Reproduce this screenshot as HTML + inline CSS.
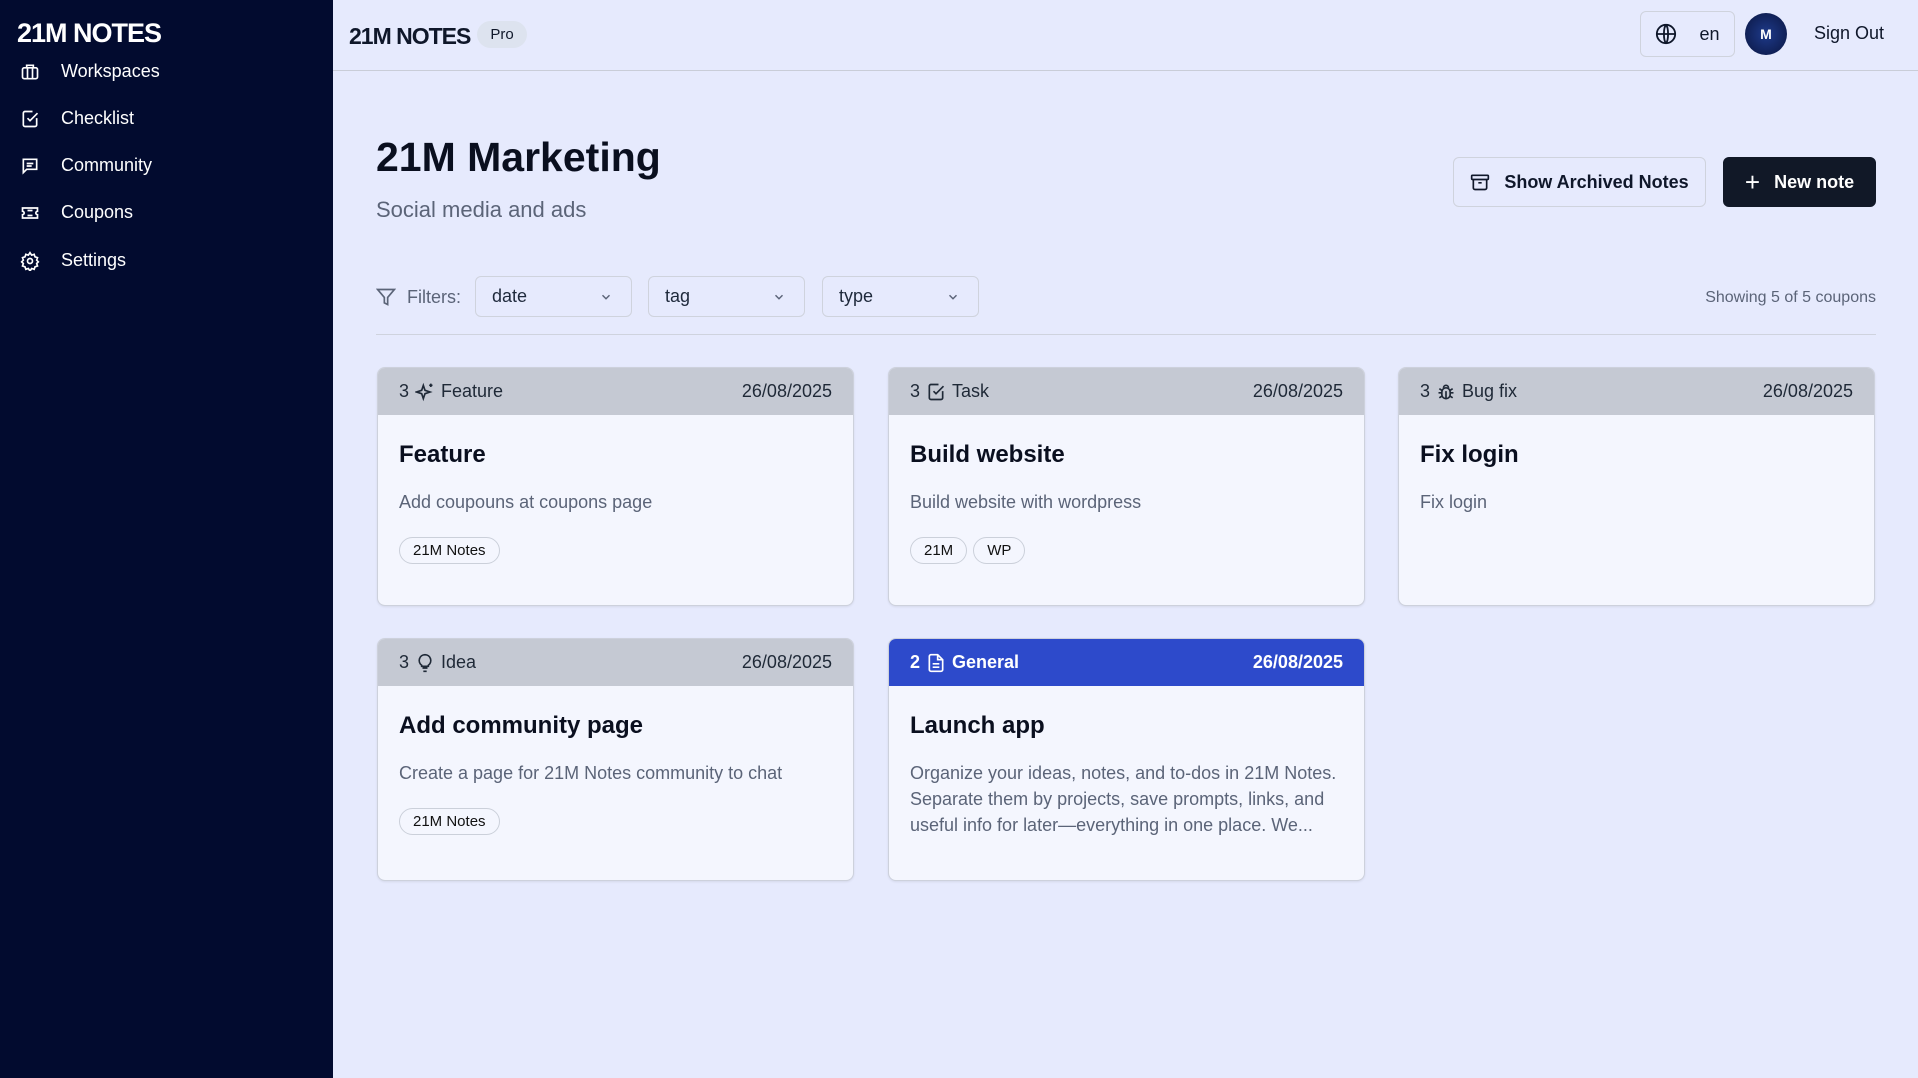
<!DOCTYPE html>
<html><head><meta charset="utf-8"><style>
*{box-sizing:border-box;margin:0;padding:0}
body{width:1918px;height:1078px;overflow:hidden;background:#e6eafd;font-family:"Liberation Sans",sans-serif;color:#0f172a;position:relative}
.side{position:absolute;left:0;top:0;width:333px;height:1078px;background:#020b2f;color:#fff}
.logo{font-weight:900;letter-spacing:-1px;font-size:27px}
.side .logo{position:absolute;left:17px;top:18px}
.nav{position:absolute;left:20px;font-size:18px;display:flex;align-items:center;gap:21px}
.nav svg{width:20px;height:20px}
.hdr{position:absolute;left:333px;top:0;right:0;height:71px;border-bottom:1px solid #c9cdd8}
.abs{position:absolute}
.btn{position:absolute;border:1px solid #cfd3dd;border-radius:6px;display:flex;align-items:center;justify-content:center;gap:14px;font-size:18px;font-weight:600}
.sel{position:absolute;top:276px;height:41px;border:1px solid #cfd3dd;border-radius:6px;font-size:18px;color:#1e293b;padding-left:16px;display:flex;align-items:center}
.sel svg{position:absolute;right:18px;top:13px}
.card{position:absolute;width:477px;background:#f4f6fe;border:1px solid #cdd1dc;border-radius:8px;overflow:hidden;box-shadow:0 1px 2px rgba(0,0,0,.08)}
.ch{height:47px;background:#c5c9d3;display:flex;align-items:center;justify-content:space-between;padding:0 21px;font-size:18px;color:#1f2937}
.ch span{display:flex;align-items:center;gap:6px}
.ct{font-size:24px;font-weight:700;color:#0a0f1f;margin:26px 21px 0}
.cd{font-size:18px;color:#5b6478;margin:20px 21px 0;line-height:26px}
.tags{margin:22px 21px 0;display:flex;gap:6px}
.tag{border:1px solid #cbd0da;border-radius:14px;font-size:15px;font-weight:500;padding:4px 13px;color:#111}
</style></head><body>
<div class="side">
<div class="logo">21M NOTES</div>
<div class="nav" style="top:61px"><svg viewBox="0 0 24 24" fill="none" stroke="#fff" stroke-width="2"><rect x="3" y="7" width="18" height="13" rx="2"/><path d="M8 7V4h8v3M9 7v13M15 7v13"/></svg>Workspaces</div>
<div class="nav" style="top:108px"><svg viewBox="0 0 24 24" fill="none" stroke="#fff" stroke-width="2"><path d="M20 11v8a2 2 0 0 1-2 2H6a2 2 0 0 1-2-2V5a2 2 0 0 1 2-2h9"/><path d="M9 11l3 3 9-9"/></svg>Checklist</div>
<div class="nav" style="top:155px"><svg viewBox="0 0 24 24" fill="none" stroke="#fff" stroke-width="2"><path d="M4 4h16v12H8l-4 4z"/><path d="M8 9h8M8 12h6"/></svg>Community</div>
<div class="nav" style="top:202px"><svg viewBox="0 0 24 24" fill="none" stroke="#fff" stroke-width="2"><path d="M3 6h18v4a2 2 0 0 0 0 4v4H3v-4a2 2 0 0 0 0-4z"/><path d="M9 9h6M9 15h6"/></svg>Coupons</div>
<div class="nav" style="top:250px"><svg viewBox="0 0 24 24" fill="none" stroke="#fff" stroke-width="2"><circle cx="12" cy="12" r="3"/><path d="M12 2l2 3 3-1 1 3 3 1-1 3 2 2-2 2 1 3-3 1-1 3-3-1-2 3-2-3-3 1-1-3-3-1 1-3-2-2 2-2-1-3 3-1 1-3 3 1z"/></svg>Settings</div>
</div>
<div class="hdr">
<div class="logo abs" style="left:16px;top:23px;font-size:23px">21M NOTES</div>
<div class="abs" style="left:144px;top:21px;width:50px;height:27px;border-radius:14px;background:#dde3ef;font-size:15px;display:flex;align-items:center;justify-content:center">Pro</div>
</div>
<div class="btn" style="left:1640px;top:11px;width:95px;height:46px;gap:22px;font-weight:500"><svg width="22" height="22" viewBox="0 0 24 24" fill="none" stroke="#0f172a" stroke-width="2"><circle cx="12" cy="12" r="10"/><path d="M2 12h20M12 2c3 3 3 17 0 20M12 2c-3 3-3 17 0 20"/></svg>en</div>
<div class="abs" style="left:1745px;top:13px;width:42px;height:42px;border-radius:50%;background:radial-gradient(#1e3a8a,#0a1540);color:#fff;font-size:14px;font-weight:700;display:flex;align-items:center;justify-content:center">M</div>
<div class="abs" style="left:1814px;top:23px;font-size:18px;font-weight:500">Sign Out</div>
<div class="abs" style="left:376px;top:134px;font-size:41px;font-weight:700;color:#0a0f1f">21M Marketing</div>
<div class="abs" style="left:376px;top:197px;font-size:22px;color:#5b6478">Social media and ads</div>
<div class="btn" style="left:1453px;top:157px;width:253px;height:50px"><svg width="20" height="20" viewBox="0 0 24 24" fill="none" stroke="#0f172a" stroke-width="2"><rect x="2" y="4" width="20" height="5" rx="1"/><path d="M4 9v10a2 2 0 0 0 2 2h12a2 2 0 0 0 2-2V9M10 13h4"/></svg>Show Archived Notes</div>
<div class="btn" style="left:1723px;top:157px;width:153px;height:50px;background:#111827;color:#fff;border-color:#111827"><span style="font-size:26px;font-weight:300">+</span>New note</div>
<svg class="abs" style="left:376px;top:287px" width="20" height="20" viewBox="0 0 24 24" fill="none" stroke="#5b6478" stroke-width="2"><path d="M22 3H2l8 9.5V19l4 2v-8.5z"/></svg>
<div class="abs" style="left:407px;top:287px;font-size:18px;color:#5b6478">Filters:</div>
<div class="sel" style="left:475px;width:157px">date<svg width="14" height="14" viewBox="0 0 24 24" fill="none" stroke="#5b6478" stroke-width="2.5"><path d="M6 9l6 6 6-6"/></svg></div>
<div class="sel" style="left:648px;width:157px">tag<svg width="14" height="14" viewBox="0 0 24 24" fill="none" stroke="#5b6478" stroke-width="2.5"><path d="M6 9l6 6 6-6"/></svg></div>
<div class="sel" style="left:822px;width:157px">type<svg width="14" height="14" viewBox="0 0 24 24" fill="none" stroke="#5b6478" stroke-width="2.5"><path d="M6 9l6 6 6-6"/></svg></div>
<div class="abs" style="right:42px;top:289px;font-size:16px;color:#5b6478">Showing 5 of 5 coupons</div>
<div class="abs" style="left:376px;top:334px;width:1500px;height:1px;background:#cfd3de"></div>

<div class="card" style="left:377px;top:367px;height:239px"><div class="ch"><span>3 <svg width="20" height="20" viewBox="0 0 24 24" fill="none" stroke="#1f2937" stroke-width="2"><path d="M10 4l2 6 6 2-6 2-2 6-2-6-6-2 6-2z"/><path d="M19 2v4M17 4h4"/></svg>Feature</span><span>26/08/2025</span></div>
<div class="ct">Feature</div><div class="cd">Add coupouns at coupons page</div><div class="tags"><div class="tag">21M Notes</div></div></div>

<div class="card" style="left:888px;top:367px;height:239px"><div class="ch"><span>3 <svg width="20" height="20" viewBox="0 0 24 24" fill="none" stroke="#1f2937" stroke-width="2"><path d="M20 11v8a2 2 0 0 1-2 2H6a2 2 0 0 1-2-2V5a2 2 0 0 1 2-2h9"/><path d="M9 11l3 3 9-9"/></svg>Task</span><span>26/08/2025</span></div>
<div class="ct">Build website</div><div class="cd">Build website with wordpress</div><div class="tags"><div class="tag">21M</div><div class="tag">WP</div></div></div>

<div class="card" style="left:1398px;top:367px;height:239px"><div class="ch"><span>3 <svg width="20" height="20" viewBox="0 0 24 24" fill="none" stroke="#1f2937" stroke-width="2"><rect x="7" y="7" width="10" height="13" rx="5"/><path d="M9 7a3 3 0 0 1 6 0M12 11v9M3 13h4M17 13h4M4 8l3 2M20 8l-3 2M4 19l3-2M20 19l-3-2"/></svg>Bug fix</span><span>26/08/2025</span></div>
<div class="ct">Fix login</div><div class="cd">Fix login</div></div>

<div class="card" style="left:377px;top:638px;height:243px"><div class="ch"><span>3 <svg width="20" height="20" viewBox="0 0 24 24" fill="none" stroke="#1f2937" stroke-width="2"><path d="M9 18h6M10 22h4M12 2a7 7 0 0 0-4 12.7V16h8v-1.3A7 7 0 0 0 12 2z"/></svg>Idea</span><span>26/08/2025</span></div>
<div class="ct">Add community page</div><div class="cd">Create a page for 21M Notes community to chat</div><div class="tags"><div class="tag">21M Notes</div></div></div>

<div class="card" style="left:888px;top:638px;height:243px"><div class="ch" style="background:#2d4acb;color:#fff;font-weight:600"><span>2 <svg width="20" height="20" viewBox="0 0 24 24" fill="none" stroke="#fff" stroke-width="2"><path d="M14 2H6a2 2 0 0 0-2 2v16a2 2 0 0 0 2 2h12a2 2 0 0 0 2-2V8z"/><path d="M14 2v6h6M8 13h8M8 17h8"/></svg>General</span><span>26/08/2025</span></div>
<div class="ct">Launch app</div><div class="cd">Organize your ideas, notes, and to-dos in 21M Notes. Separate them by projects, save prompts, links, and useful info for later—everything in one place. We...</div></div>
</body></html>
